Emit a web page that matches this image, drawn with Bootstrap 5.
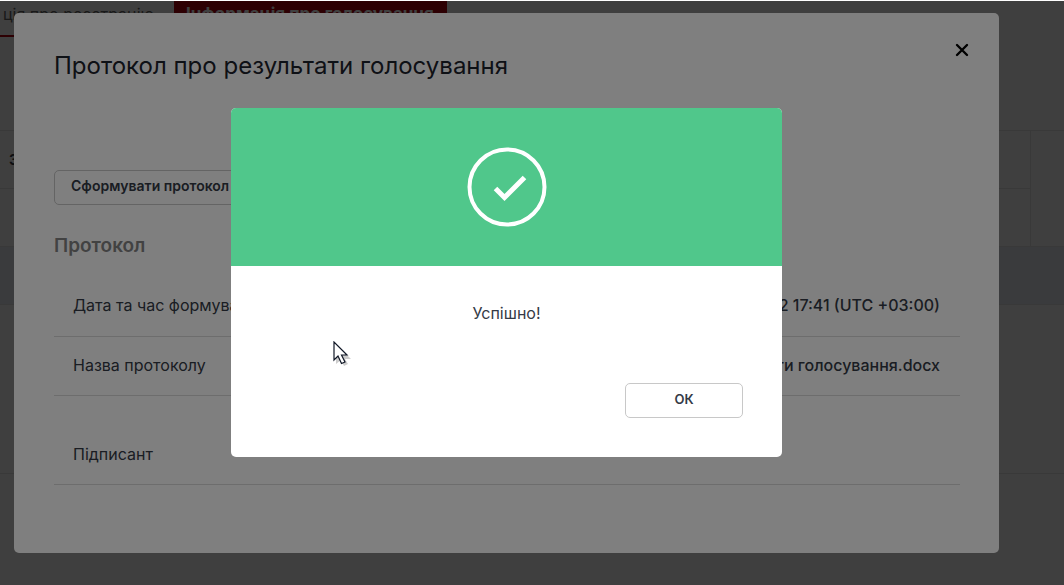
<!DOCTYPE html>
<html lang="uk">
<head>
<meta charset="utf-8">
<meta name="viewport" content="width=device-width, initial-scale=1">
<title>Протокол про результати голосування</title>
<link href="https://cdn.jsdelivr.net/npm/bootstrap@5.3.0/dist/css/bootstrap.min.css" rel="stylesheet">
<style>
  body { font-family: Inter, Roboto, "Liberation Sans", sans-serif; font-size: 16px; line-height: 20px; color: #343a46; background: #fff; }
  .screen { min-height: 100vh; border-top: 1px solid #fff; }
  .shade { background: rgba(0, 0, 0, .5); }
  .layer { padding: 12px 65px 31px 14px; }

  /* page behind the dialogs */
  .vote-tabs { width: 900px; max-width: 100%; border-bottom: 2px solid #b4000c; }
  .vote-tabs .nav-link { border-radius: 0; color: #666; padding: 3px 12px 11px; white-space: nowrap; }
  .vote-tabs .nav-link.active { background: #b4000c; color: #fff; font-weight: 700; font-size: 17px; width: 273px; }
  .vote-tabs .tab-first { width: 174px; text-align: right; padding-left: 0; padding-right: 20px; }
  .vote-grid { margin-top: 93px; border-collapse: collapse; }
  .vote-grid th, .vote-grid td { border: 1px solid #e4e4e4; border-left: 0; height: 58px; padding: 0 9px; font-size: 14px; color: #343a46; }
  .vote-grid .edge-col { width: 34px; border-right: 0; }
  .vote-grid .picked td { background: #e8eef6; border-right: 0; }
  .vote-grid .tall td { height: 169px; border-right: 0; }

  /* protocol dialog */
  .sheet { background: #fff; border-radius: 5px; padding: 37px 39px 68px 40px; }
  .sheet-title { font-size: 24px; line-height: 32px; font-weight: 400; color: #1c222c; margin: 0; }
  .close-x { width: 16px; height: 16px; margin-right: -10px; margin-top: -8px; color: #000; line-height: 0; }
  .plain-btn { border: 1px solid #c8c8c8; border-radius: 5px; background: #fff; color: #343a46; font-weight: 600; font-size: 13px; line-height: 20px; height: 35px; padding: 4px 16px 8px; }
  .sheet-action { margin-top: 88px; width: 240px; text-align: left; white-space: nowrap; font-size: 14px; }
  .sheet-sub { font-size: 19px; line-height: 24px; font-weight: 600; color: #858585; margin: 29px 0 19px; }
  .facts { width: 100%; }
  .facts th, .facts td { height: 59px; padding: 0 20px 2px; border-bottom: 1px solid #dadada; font-weight: 400; }
  .facts th { padding-left: 19px; }
  .facts td { text-align: right; font-weight: 500; }
  .facts .signer th, .facts .signer td { height: 89px; padding-top: 30px; }

  /* result message */
  .notice-layer { padding-top: 107px; }
  .notice { width: 100%; max-width: 551px; background: #fff; border-radius: 5px; overflow: hidden; }
  .notice-head { background: #50c78b; height: 158px; }
  .notice-text { padding: 37px 40px 60px; text-align: center; margin: 0; }
  .notice-foot { padding: 0 39px 39px; }
  .notice-foot .plain-btn { width: 118px; }
  .pointer { left: 333px; top: 340px; }
</style>
</head>
<body>
<div class="screen position-relative overflow-hidden">
  <div>
    <nav class="nav vote-tabs flex-nowrap">
      <a class="nav-link tab-first" href="#">ція про реєстрацію</a>
      <a class="nav-link active" href="#">Інформація про голосування</a>
    </nav>
    <table class="vote-grid w-100">
      <tr><th>З</th><td class="edge-col" rowspan="2"></td></tr>
      <tr><td></td></tr>
      <tr class="picked"><td colspan="2"></td></tr>
      <tr class="tall"><td colspan="2"></td></tr>
    </table>
  </div>

  <div class="shade layer position-absolute top-0 start-0 w-100 h-100">
    <section class="sheet" role="dialog" aria-labelledby="sheetTitle">
      <div class="d-flex justify-content-between">
        <h1 class="sheet-title" id="sheetTitle">Протокол про результати голосування</h1>
        <button type="button" class="close-x border-0 bg-transparent p-0" aria-label="Закрити">
          <svg width="16" height="16" viewBox="0 0 16 16" fill="none" stroke="currentColor" stroke-width="2.400" stroke-linecap="round"><path d="M3 3l10 10M13 3L3 13"/></svg>
        </button>
      </div>
      <button type="button" class="plain-btn sheet-action">Сформувати протокол</button>
      <h2 class="sheet-sub">Протокол</h2>
      <table class="facts">
        <tr><th scope="row">Дата та час формування</th><td>2022 17:41 (UTC +03:00)</td></tr>
        <tr><th scope="row">Назва протоколу</th><td>Протокол про результати голосування.docx</td></tr>
        <tr class="signer"><th scope="row">Підписант</th><td></td></tr>
      </table>
    </section>
  </div>

  <div class="shade layer notice-layer position-absolute top-0 start-0 w-100 h-100">
    <section class="notice mx-auto" role="alertdialog" aria-labelledby="noticeText">
      <div class="notice-head d-flex align-items-center justify-content-center">
        <svg width="80" height="80" viewBox="0 0 80 80" fill="none" stroke="#fff"><circle cx="40" cy="40" r="37.500" stroke-width="4"/><path d="M28.500 41.500l9 9 20-20" stroke-width="5"/></svg>
      </div>
      <p class="notice-text" id="noticeText">Успішно!</p>
      <div class="notice-foot d-flex justify-content-end">
        <button type="button" class="plain-btn">ОК</button>
      </div>
    </section>
  </div>

  <svg class="pointer position-absolute" width="20" height="28" viewBox="0 0 20 28" aria-hidden="true">
    <path d="M3 3v20l5-4 3 6 4-2-3-5h6z" fill="#000" opacity=".2"/>
    <path d="M1 1v18l4-4 3.500 7.500 3.500-1.500-3.500-7h5.500z" fill="#fff" stroke="#111827" stroke-width="1.200"/>
  </svg>
</div>
<script src="https://cdn.jsdelivr.net/npm/bootstrap@5.3.0/dist/js/bootstrap.bundle.min.js"></script>
</body>
</html>
